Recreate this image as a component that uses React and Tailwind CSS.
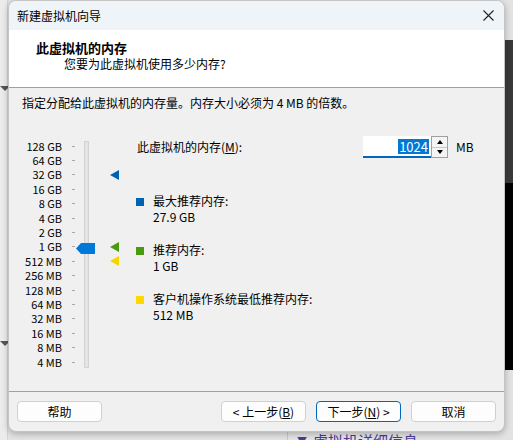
import React from "react";

const SCALE = [
  "128 GB", "64 GB", "32 GB", "16 GB", "8 GB", "4 GB", "2 GB", "1 GB",
  "512 MB", "256 MB", "128 MB", "64 MB", "32 MB", "16 MB", "8 MB", "4 MB",
];

// which row gets which marker
const MARKERS = { 2: "#0063b1", 7: "#4a9a10", 8: "#f7d600" };

function Marker({ color }) {
  return (
    <svg width="9" height="10" viewBox="0 0 9 10">
      <polygon points="0,5 9,0 9,10" fill={color} />
    </svg>
  );
}

function Button({ children, primary }) {
  return (
    <button
      className={
        primary
          ? "w-[85px] h-[21px] rounded-[4px] border border-[#0067c0] bg-[#fdfdfd] text-[12px] text-black"
          : "w-[85px] h-[21px] rounded-[4px] border border-[#d0d0d0] bg-[#fdfdfd] text-[12px] text-black"
      }
    >
      {children}
    </button>
  );
}

function Legend({ color, title, value }) {
  return (
    <div className="flex items-start">
      <div className="w-[8px] h-[8px] mt-[5px] mr-[9px]" style={{ background: color }} />
      <div className="leading-[16px] text-[12px]">
        <div>{title}</div>
        <div>{value}</div>
      </div>
    </div>
  );
}

export default function App() {
  return (
    <div
      className="relative w-[513px] h-[440px] overflow-hidden bg-[#e3e3e3] text-black"
      style={{ fontFamily: '"Noto Sans CJK SC", "Noto Sans", sans-serif' }}
    >
      {/* desktop behind the dialog */}
      <div className="absolute left-0 top-0 w-[8px] h-[440px] bg-[#ececec] border-r border-[#d4d4d4]" />
      <div className="absolute left-0 top-[86px] w-0 h-0 border-l-[5px] border-r-[5px] border-t-[5px] border-l-transparent border-r-transparent border-t-[#555]" />
      <div className="absolute left-0 top-[341px] w-0 h-0 border-l-[5px] border-r-[5px] border-t-[5px] border-l-transparent border-r-transparent border-t-[#555]" />
      <div className="absolute right-0 top-[40px] w-[8px] h-[143px] bg-[#3a3a3a]" />
      <div className="absolute right-0 top-[183px] w-[8px] h-[187px] bg-black" />
      <div className="absolute left-[287px] top-[430px] w-[226px] h-[12px] border-l border-[#c8c8c8]">
        <div className="flex items-center gap-[6px] pl-[9px] pt-[2px] text-[15px] leading-[18px] text-[#4a3a9c]">
          <span className="text-[10px]">▼</span>
          <span>虚拟机详细信息</span>
        </div>
      </div>

      {/* dialog window */}
      <div className="relative ml-[8px] w-[497px] h-[432px] rounded-[8px] overflow-hidden bg-[#f0f0f0] border border-[#c4c4c4] shadow-[0_2px_6px_rgba(0,0,0,0.25)] flex flex-col">
        <div className="h-[29px] bg-[#eff4f9] flex items-center justify-between pl-[8px] pr-[10px]">
          <span className="text-[12px]">新建虚拟机向导</span>
          <svg width="11" height="11" viewBox="0 0 11 11">
            <path d="M0.5 0.5 L10.5 10.5 M10.5 0.5 L0.5 10.5" stroke="#222" strokeWidth="1.1" />
          </svg>
        </div>

        <div className="h-[58px] bg-white border-b border-[#a0a0a0] pt-[9px]">
          <div className="pl-[27px] text-[13px] font-bold leading-[17px]">此虚拟机的内存</div>
          <div className="pl-[55px] text-[12px] leading-[16px]">您要为此虚拟机使用多少内存?</div>
        </div>

        <div className="flex-1 flex flex-col">
          <div className="pl-[13px] pt-[7px] text-[12px] leading-[16px]">
            指定分配给此虚拟机的内存量。内存大小必须为 4 MB 的倍数。
          </div>

          <div className="flex items-start mt-[28px]">
            {/* scale labels */}
            <div className="w-[53px] flex flex-col">
              {SCALE.map((s) => (
                <div key={s} className="h-[14.4px] flex items-center justify-end text-[11px] leading-none">
                  {s}
                </div>
              ))}
            </div>
            {/* ticks */}
            <div className="ml-[10px] w-[3px] flex flex-col">
              {SCALE.map((s) => (
                <div key={s} className="h-[14.4px] flex items-center">
                  <div className="w-[3px] h-px bg-[#a8a8a8]" />
                </div>
              ))}
            </div>
            {/* track */}
            <div className="relative ml-[9px] mt-[2px] w-[5px] h-[227px] bg-[#e4e4e4] border border-[#d2d2d2]">
              <svg className="absolute left-[-9px] top-[101px]" width="19" height="11" viewBox="0 0 19 11">
                <polygon points="0,5.5 5,0 19,0 19,11 5,11" fill="#0078d7" />
              </svg>
            </div>
            {/* markers */}
            <div className="ml-[21px] w-[9px] flex flex-col">
              {SCALE.map((s, i) => (
                <div key={s} className="h-[14.4px] flex items-center">
                  {MARKERS[i] && <Marker color={MARKERS[i]} />}
                </div>
              ))}
            </div>

            {/* form */}
            <div className="ml-[18px] -mt-[3px] flex flex-col">
              <div className="flex items-center h-[22px]">
                <div className="w-[226px] text-[12px]">
                  此虚拟机的内存(<span className="underline">M</span>):
                </div>
                <div className="w-[68px] h-[22px] bg-white border-b-2 border-[#0067c0] flex items-center justify-end pr-[2px]">
                  <span className="bg-[#0078d7] text-white text-[13px] leading-[15px] px-px">1024</span>
                </div>
                <div className="w-[17px] h-[22px] border border-[#a0a0a0] bg-[#f4f4f4] flex flex-col">
                  <div className="flex-1 flex items-center justify-center border-b border-[#c8c8c8]">
                    <div className="w-0 h-0 border-l-[3px] border-r-[3px] border-b-[4px] border-l-transparent border-r-transparent border-b-black" />
                  </div>
                  <div className="flex-1 flex items-center justify-center">
                    <div className="w-0 h-0 border-l-[3px] border-r-[3px] border-t-[4px] border-l-transparent border-r-transparent border-t-black" />
                  </div>
                </div>
                <span className="ml-[8px] text-[12px]">MB</span>
              </div>

              <div className="mt-[35px] ml-[-1px] flex flex-col gap-[17px]">
                <Legend color="#0063b1" title="最大推荐内存:" value="27.9 GB" />
                <Legend color="#4a9a10" title="推荐内存:" value="1 GB" />
                <Legend color="#ffd800" title="客户机操作系统最低推荐内存:" value="512 MB" />
              </div>
            </div>
          </div>
        </div>

        <div className="h-[40px] border-t border-[#a0a0a0] flex items-start pt-[9px] pl-[8px]">
          <Button>帮助</Button>
          <div className="ml-auto flex gap-[10px] pr-[8px]">
            <Button>&lt; 上一步(<span className="underline">B</span>)</Button>
            <Button primary>下一步(<span className="underline">N</span>) &gt;</Button>
            <Button>取消</Button>
          </div>
        </div>
      </div>
    </div>
  );
}
